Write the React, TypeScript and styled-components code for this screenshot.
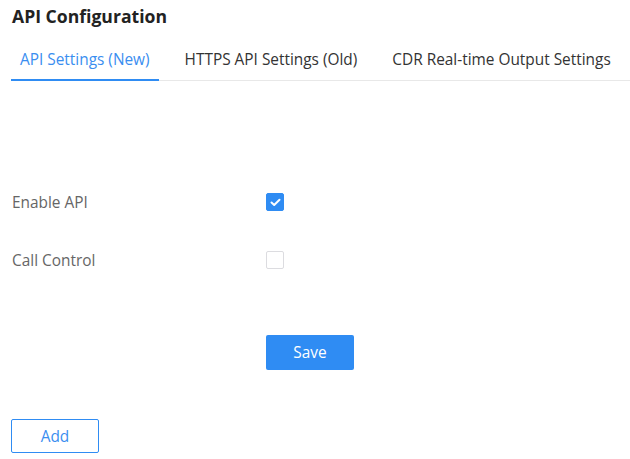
import React, { useState } from 'react'
import styled, { createGlobalStyle } from 'styled-components'

const GlobalStyle = createGlobalStyle`
    html, body {
        margin: 0;
        padding: 0;
        background: #fff;
        font-family: 'Open Sans', 'Noto Sans', sans-serif;
    }
`

const Page = styled.div`
    width: 630px;
    height: 459px;
    padding: 5px 0 0 12px;
    box-sizing: border-box;
    overflow: hidden;
`

const Title = styled.h1`
    margin: 0;
    font-size: 17.6px;
    line-height: 22px;
    font-weight: 700;
    color: #222;
`

const TabBar = styled.div`
    display: flex;
    gap: 17px;
    margin: 20px 0 0 -1px;
    border-bottom: 1px solid #e8e8e8;
`

const Tab = styled.div<{ $active?: boolean }>`
    padding: 0 9px;
    height: 34px;
    line-height: 26px;
    font-size: 15.4px;
    color: ${(p) => (p.$active ? '#3a8ef0' : '#333')};
    border-bottom: 2px solid ${(p) => (p.$active ? '#2f8cf3' : 'transparent')};
    margin-bottom: -1px;
    box-sizing: border-box;
    cursor: pointer;
    white-space: nowrap;
`

const Form = styled.div`
    display: flex;
    flex-direction: column;
    gap: 38px;
    margin-top: 111px;
`

const Row = styled.div`
    display: flex;
    align-items: center;
    height: 20px;
`

const Label = styled.div`
    width: 254px;
    font-size: 15.4px;
    color: #666;
`

const Check = styled.button<{ $on?: boolean }>`
    width: 18px;
    height: 18px;
    padding: 0;
    border-radius: 2px;
    border: 1px solid ${(p) => (p.$on ? '#2f8cf3' : '#dcdce0')};
    background: ${(p) => (p.$on ? '#2f8cf3' : '#fff')};
    display: flex;
    align-items: center;
    justify-content: center;
    cursor: pointer;
`

const Actions = styled.div`
    padding-left: 254px;
    margin-top: 65px;
`

const PrimaryButton = styled.button`
    width: 88px;
    height: 35px;
    border: none;
    border-radius: 2px;
    background: #2f8cf3;
    color: #fff;
    font-family: inherit;
    font-size: 15.4px;
    cursor: pointer;
`

const OutlineButton = styled.button`
    margin-top: 49px;
    margin-left: -1px;
    width: 88px;
    height: 34px;
    border: 1px solid #2f8cf3;
    border-radius: 2px;
    background: #fff;
    color: #3a8ef0;
    font-family: inherit;
    font-size: 15.4px;
    cursor: pointer;
`

const tabs = ['API Settings (New)', 'HTTPS API Settings (Old)', 'CDR Real-time Output Settings']

const Tick = () => (
    <svg width="11" height="9" viewBox="0 0 11 9">
        <path d="M1.5 4.5 L4.2 7 L9.5 1.8" fill="none" stroke="#fff" strokeWidth="2" strokeLinecap="round" strokeLinejoin="round" />
    </svg>
)

export default function App() {
    const [active, setActive] = useState(0)
    const [enableApi, setEnableApi] = useState(true)
    const [callControl, setCallControl] = useState(false)

    return (
        <>
            <GlobalStyle />
            <Page>
                <Title>API Configuration</Title>
                <TabBar>
                    {tabs.map((t, i) => (
                        <Tab key={t} $active={i === active} onClick={() => setActive(i)}>
                            {t}
                        </Tab>
                    ))}
                </TabBar>

                <Form>
                    <Row>
                        <Label>Enable API</Label>
                        <Check $on={enableApi} onClick={() => setEnableApi(!enableApi)}>
                            {enableApi && <Tick />}
                        </Check>
                    </Row>
                    <Row>
                        <Label>Call Control</Label>
                        <Check $on={callControl} onClick={() => setCallControl(!callControl)}>
                            {callControl && <Tick />}
                        </Check>
                    </Row>
                </Form>

                <Actions>
                    <PrimaryButton>Save</PrimaryButton>
                </Actions>

                <OutlineButton>Add</OutlineButton>
            </Page>
        </>
    )
}
